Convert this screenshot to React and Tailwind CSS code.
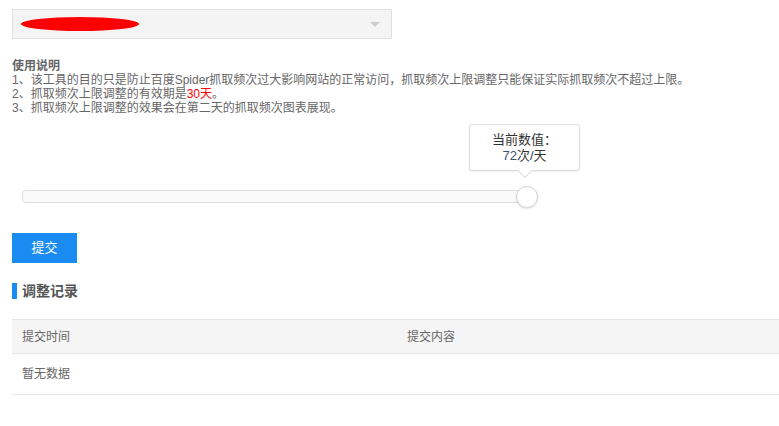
import React from "react";

const font = { fontFamily: '"Liberation Sans", "Noto Sans CJK SC", sans-serif' };

const rules = [
  "1、该工具的目的只是防止百度Spider抓取频次过大影响网站的正常访问，抓取频次上限调整只能保证实际抓取频次不超过上限。",
  null,
  "3、抓取频次上限调整的效果会在第二天的抓取频次图表展现。",
];

const App = () => {
  return (
    <div className="min-h-[426px] bg-white pl-3 pt-[9px] text-[12px] text-[#666]" style={font}>
      {/* site select */}
      <div className="flex h-[30px] w-[380px] items-center justify-between border border-[#e0e0e0] bg-[#f4f4f4] pl-2 pr-[11px]">
        <div className="h-[14px] w-[118px] rounded-[50%] bg-[#ff0000]" />
        <div className="h-0 w-0 border-x-[5px] border-t-[5px] border-x-transparent border-t-[#cccccc]" />
      </div>

      {/* instructions */}
      <div className="mt-[20px] leading-[14px]">
        <div className="font-bold">使用说明</div>
        <div>{rules[0]}</div>
        <div>
          2、抓取频次上限调整的有效期是<span className="text-[#ff0000]">30天</span>。
        </div>
        <div>{rules[2]}</div>
      </div>

      {/* slider */}
      <div className="relative ml-[10px] mt-[75px] h-[13px] w-[515px]">
        <div className="h-[13px] w-full rounded-[4px] border border-[#dddddd] bg-[#fafafa]" />
        <div className="absolute right-[-1px] top-[-4px] h-[22px] w-[22px] rounded-full border border-[#d6d6d6] bg-white shadow-[0_1px_2px_rgba(0,0,0,0.12)]" />
        <div className="absolute bottom-[32px] left-[447px] w-[111px]">
          <div className="relative flex h-[47px] flex-col items-center justify-center rounded-[3px] border border-[#dddddd] bg-white text-[13px] leading-[16px] text-[#333] shadow-[0_1px_2px_rgba(0,0,0,0.06)]">
            <div>当前数值：</div>
            <div>
              <span className="text-[#3d5170]">72</span>次/天
            </div>
            <div className="absolute bottom-[-6px] left-[50px] h-[10px] w-[10px] rotate-45 border-b border-r border-[#dddddd] bg-white" />
          </div>
        </div>
      </div>

      {/* submit */}
      <button className="mt-[30px] block h-[30px] w-[65px] bg-[#1a8bf0] text-[13px] text-white">
        提交
      </button>

      {/* records */}
      <div className="mt-[20px] flex h-[16px] items-center">
        <div className="h-[16px] w-[5px] bg-[#1a8bf0]" />
        <div className="ml-[5px] text-[14px] font-bold text-[#555]">调整记录</div>
      </div>

      <div className="mt-[20px]">
        <div className="flex h-[35px] items-center border-y border-[#e6e6e6] bg-[#f5f5f5]">
          <div className="w-[385px] pl-[10px]">提交时间</div>
          <div className="pl-[10px]">提交内容</div>
        </div>
        <div className="flex h-[41px] items-center border-b border-[#e6e6e6] pl-[10px]">暂无数据</div>
      </div>
    </div>
  );
};

export default App;
